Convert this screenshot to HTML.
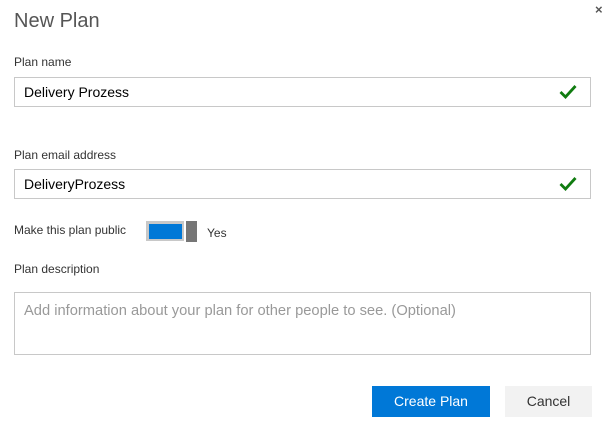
<!DOCTYPE html>
<html><head><style>
body{margin:0;width:611px;height:437px;background:#fff;font-family:"Liberation Sans",sans-serif;position:relative;overflow:hidden;color:#333}
.a{position:absolute}
.lbl{font-size:12px;color:#333}
.inp{position:absolute;left:14px;width:577px;height:29px;border:1px solid #c8c8c8;box-sizing:border-box;}
.inp span{position:absolute;left:9px;top:6px;font-size:14px;color:#000}
.chk{position:absolute;right:13px;top:6px}
</style></head><body>
<div class="a" style="left:14px;top:10px;font-size:20px;color:#555">New Plan</div>
<div class="a" style="left:595px;top:2px;font-size:13px;color:#555;font-weight:bold">×</div>
<div class="a lbl" style="left:14px;top:55px">Plan name</div>
<div class="inp" style="top:77px;height:30px"><span>Delivery Prozess</span>
<svg class="chk" width="18" height="15" viewBox="0 0 18 15"><path d="M1.5 8 L6.5 13 L16.5 2" stroke="#107c10" stroke-width="2.8" fill="none"/></svg></div>
<div class="a lbl" style="left:14px;top:148px">Plan email address</div>
<div class="inp" style="top:169px;height:30px"><span>DeliveryProzess</span>
<svg class="chk" width="18" height="15" viewBox="0 0 18 15"><path d="M1.5 8 L6.5 13 L16.5 2" stroke="#107c10" stroke-width="2.8" fill="none"/></svg></div>
<div class="a lbl" style="left:14px;top:223px">Make this plan public</div>
<div class="a" style="left:146px;top:221px;width:38px;height:20px;background:#c8c8c8"></div>
<div class="a" style="left:149px;top:224px;width:33px;height:15px;background:#0078d7"></div>
<div class="a" style="left:186px;top:221px;width:11px;height:21px;background:#767676"></div>
<div class="a lbl" style="left:207px;top:226px">Yes</div>
<div class="a lbl" style="left:14px;top:262px">Plan description</div>
<div class="inp" style="top:292px;height:63px"><span style="color:#999;font-size:14.7px;left:9px;top:10px">Add information about your plan for other people to see. (Optional)</span></div>
<div class="a" style="left:372px;top:386px;width:118px;height:31px;background:#0078d7;color:#fff;font-size:14px;text-align:center;line-height:31px">Create Plan</div>
<div class="a" style="left:505px;top:386px;width:87px;height:31px;background:#f2f2f2;color:#333;font-size:14px;text-align:center;line-height:31px">Cancel</div>
</body></html>
